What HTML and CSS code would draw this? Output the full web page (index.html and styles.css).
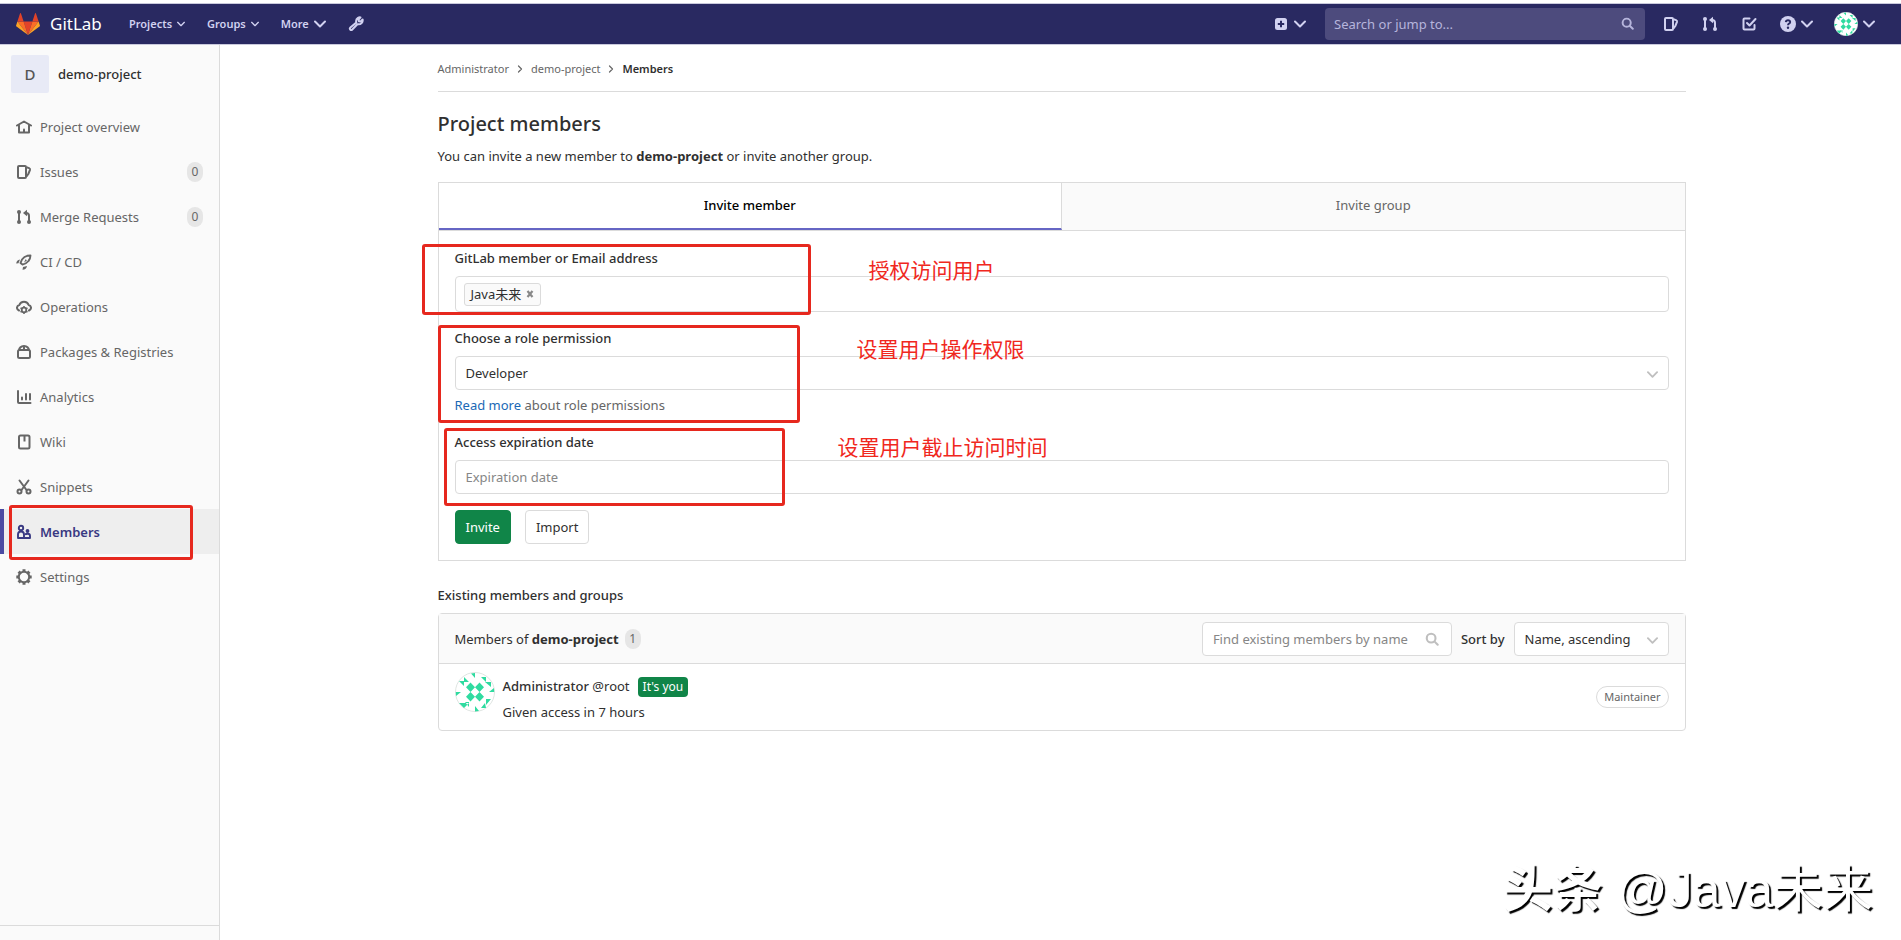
FILE: index.html
```html
<!DOCTYPE html>
<html lang="en">
<head>
<meta charset="utf-8">
<title>Members · demo-project · GitLab</title>
<link rel="stylesheet" href="styles.css">
</head>
<body>
<svg class="defs" aria-hidden="true">
  <symbol id="chevron" viewBox="0 0 12 12"><path d="M1 3.500l5 5 5-5" fill="none" stroke="currentColor" stroke-width="2" stroke-linecap="round" stroke-linejoin="round"/></symbol>
  <symbol id="angle" viewBox="0 0 8 8"><path d="M2.500 1l3 3-3 3" fill="none" stroke="currentColor" stroke-width="1.200" stroke-linecap="round" stroke-linejoin="round"/></symbol>
  <symbol id="search" viewBox="0 0 16 16"><g fill="none" stroke="currentColor" stroke-width="2.400" stroke-linecap="round"><circle cx="7" cy="7" r="5"/><path d="M11 11l3.500 3.500"/></g></symbol>
  <symbol id="issues" viewBox="0 0 16 16"><g fill="none" stroke="currentColor" stroke-width="2" stroke-linejoin="round"><rect x="2" y="2" width="8" height="12" rx="1"/><path d="M10.500 3.200l2.600.900q1.200.500.900 1.700L12.300 10l-1.800 2.500"/></g></symbol>
  <symbol id="merge" viewBox="0 0 16 16"><g fill="none" stroke="currentColor" stroke-width="2"><path d="M3 3v10M13 13V7q0-3-3-3H9.500"/></g><g fill="currentColor"><circle cx="3" cy="3" r="2"/><circle cx="3" cy="13" r="2"/><circle cx="13" cy="13" r="2"/><path d="M11 .800v6.400L7 4z"/></g></symbol>
  <symbol id="todo" viewBox="0 0 16 16"><g fill="none" stroke="currentColor" stroke-width="2" stroke-linecap="round" stroke-linejoin="round"><path d="M8.500 2.500H3.500q-1 0-1 1v9q0 1 1 1h9q1 0 1-1V9"/><path d="M6 7l2.500 2.500L14.500 3"/></g></symbol>
  <symbol id="identicon" viewBox="0 0 40 40">
    <circle cx="20" cy="20" r="19.500" fill="#fff" stroke="#dfe5e2"/>
    <g fill="#2fdba0">
      <path d="M15.500 10.500l4.500 4.700-4.500 4.800-4.500-4.800zM24.500 10.500l4.500 4.700-4.500 4.800-4.500-4.800zM15.500 20l4.500 4.700-4.500 4.800-4.500-4.800zM24.500 20l4.500 4.700-4.500 4.800-4.500-4.800z"/>
      <path d="M16 1.500l4-.500v5zM24 39l-4 .500V34zM.800 20H6l-5 4zM39.200 20H34l5-4z"/>
      <path d="M4 9h5v5zM9 5v5h5zM26 5l5 5V5zM30 10h6v5zM31 27v6l5-6zM30 31l-4 5h5zM4 31h10l-5 5zM10 30l4 5v-5z"/>
    </g>
  </symbol>
</svg>

<header class="navbar">
  <a class="brand" href="#">
    <svg class="tanuki" viewBox="0 0 24 22"><path fill="#e24329" d="M12 22l4.400-13.600H7.600z"/><path fill="#fc6d26" d="M12 22L7.600 8.400H1.400z"/><path fill="#fca326" d="M1.400 8.400L.100 12.500q-.200.700.400 1.100L12 22z"/><path fill="#e24329" d="M1.400 8.400h6.200L4.900.300q-.400-.500-.800 0z"/><path fill="#fc6d26" d="M12 22l4.400-13.600h6.200z"/><path fill="#fca326" d="M22.600 8.400l1.300 4.100q.200.700-.400 1.100L12 22z"/><path fill="#e24329" d="M22.600 8.400h-6.200L19.100.300q.400-.500.800 0z"/></svg>
    <span>GitLab</span>
  </a>
  <nav class="menus">
    <button type="button">Projects <svg class="chev small"><use href="#chevron"/></svg></button>
    <button type="button">Groups <svg class="chev small"><use href="#chevron"/></svg></button>
    <button type="button">More <svg class="chev"><use href="#chevron"/></svg></button>
    <a href="#" aria-label="Admin area"><svg class="icon" viewBox="0 0 16 16"><path d="M8.300 6.500q-.800-3 1.700-4.700 1.200-.700 2.500-.400L10.600 3.600l.3 1.600 1.700.300 2-2q.400 2-1 3.600-1.700 1.700-4.200 1.100L4.300 13.500q-1 1-2 .200-1-1.200.1-2.200z" fill="none" stroke="currentColor" stroke-width="2" stroke-linejoin="round"/></svg></a>
  </nav>
  <div class="tools">
    <button type="button" class="create" aria-label="New"><svg class="icon" viewBox="0 0 16 16"><rect x="2" y="2" width="12" height="12" rx="2.500" fill="currentColor"/><path d="M8 4.800v6.400M4.800 8h6.400" stroke="#292961" stroke-width="2"/></svg><svg class="chev"><use href="#chevron"/></svg></button>
    <label class="global-search"><input type="text" placeholder="Search or jump to..." aria-label="Search or jump to"><svg><use href="#search"/></svg></label>
    <a href="#" aria-label="Issues"><svg class="icon"><use href="#issues"/></svg></a>
    <a href="#" aria-label="Merge requests"><svg class="icon"><use href="#merge"/></svg></a>
    <a href="#" aria-label="To-Do List"><svg class="icon"><use href="#todo"/></svg></a>
    <button type="button" aria-label="Help"><svg class="icon" viewBox="0 0 16 16"><circle cx="8" cy="8" r="8" fill="currentColor"/><path d="M5.800 6.200q.200-2 2.200-2t2.200 1.800q0 1.200-1.200 1.700-1 .500-1 1.500" fill="none" stroke="#292961" stroke-width="1.900"/><circle cx="8" cy="11.800" r="1.200" fill="#292961"/></svg><svg class="chev"><use href="#chevron"/></svg></button>
    <button type="button" class="user" aria-label="Account"><svg class="face"><use href="#identicon"/></svg><svg class="chev"><use href="#chevron"/></svg></button>
  </div>
</header>

<div class="page">
  <aside class="sidebar">
    <a class="context" href="#"><span class="letter">D</span><strong>demo-project</strong></a>
    <nav class="side-nav">
      <a href="#"><svg class="icon" viewBox="0 0 16 16"><g fill="none" stroke="currentColor" stroke-width="2" stroke-linejoin="round" stroke-linecap="round"><path d="M1 6.500l7-4 7 4M3 6.500V13.500h10V6.500"/><path d="M8 10.500v2.500"/></g></svg><span>Project overview</span></a>
      <a href="#"><svg class="icon"><use href="#issues"/></svg><span>Issues</span><span class="badge">0</span></a>
      <a href="#"><svg class="icon"><use href="#merge"/></svg><span>Merge Requests</span><span class="badge">0</span></a>
      <a href="#"><svg class="icon" viewBox="0 0 16 16"><path d="M6.500 10.500l-2-1.500q1-4 4-6 2.500-1.500 6-1.500-.200 3.500-2 5.500-2.500 3-6 3.500z" fill="none" stroke="currentColor" stroke-width="1.900" stroke-linejoin="round"/><path d="M9.500 5.200l1.500 1-3 2.500zM.200 9.500Q.500 6 4 5.500L2.500 9.300zM6.500 15.800q4-.300 4.500-3.800L7 13z" fill="currentColor"/></svg><span>CI / CD</span></a>
      <a href="#"><svg class="icon" viewBox="0 0 16 16"><path d="M3 11.500Q.800 10.500 1 8.500q.300-2 2.300-2.500Q4.500 2.700 8 2.700T12.700 6q2 .500 2.300 2.500.200 2-2 3" fill="none" stroke="currentColor" stroke-width="2" stroke-linecap="round"/><circle cx="8" cy="11" r="2.300" fill="none" stroke="currentColor" stroke-width="1.800"/><path d="M8 7v1.500M8 13.500V15M4.500 9l1.300.700M11.500 9l-1.300.700M4.500 13l1.300-.700M11.500 13l-1.300-.700" stroke="currentColor" stroke-width="1.500"/></svg><span>Operations</span></a>
      <a href="#"><svg class="icon" viewBox="0 0 16 16"><g fill="none" stroke="currentColor" stroke-width="2" stroke-linejoin="round"><rect x="2" y="6" width="12" height="8" rx="1.500"/><path d="M3 6q.500-3.500 5-4 4.500.500 5 4M8 2v3.500"/></g></svg><span>Packages &amp; Registries</span></a>
      <a href="#"><svg class="icon" viewBox="0 0 16 16"><g fill="none" stroke="currentColor" stroke-width="2" stroke-linecap="round"><path d="M2 2v11q0 1 1 1h11.500M6 8.500v2M10 5v5.500M14 5v5.500"/></g></svg><span>Analytics</span></a>
      <a href="#"><svg class="icon" viewBox="0 0 16 16"><rect x="3" y="1.500" width="10.500" height="13" rx="1.500" fill="none" stroke="currentColor" stroke-width="2"/><path d="M8.500 2v5.500" stroke="currentColor" stroke-width="2"/></svg><span>Wiki</span></a>
      <a href="#"><svg class="icon" viewBox="0 0 16 16"><g fill="none" stroke="currentColor" stroke-width="2" stroke-linecap="round"><path d="M3.500 1.500l7 9.500M12.500 1.500l-7 9.500"/><circle cx="3.500" cy="12.500" r="2"/><circle cx="12.500" cy="12.500" r="2"/></g></svg><span>Snippets</span></a>
      <a href="#" class="active"><svg class="icon" viewBox="0 0 16 16"><g fill="none" stroke="currentColor" stroke-width="1.900" stroke-linejoin="round"><circle cx="5" cy="4" r="2.200"/><path d="M2 14v-3.500q0-3 3-3t3 3V14z"/><path d="M8 14h6v-2q0-2.300-2.300-2.300-2 0-2.700 1"/></g><circle cx="11.500" cy="7" r="1.900" fill="currentColor"/></svg><span>Members</span></a>
      <a href="#"><svg class="icon" viewBox="0 0 16 16"><circle cx="8" cy="8" r="5.200" fill="none" stroke="currentColor" stroke-width="2"/><path d="M8 .300V3M8 13v2.700M.300 8H3M13 8h2.700M2.600 2.600l1.800 1.800M11.600 11.600l1.800 1.800M13.400 2.600l-1.800 1.800M4.400 11.600l-1.800 1.800" stroke="currentColor" stroke-width="3"/></svg><span>Settings</span></a>
      <div class="mark mark-nav"></div>
    </nav>
    <div class="collapse"></div>
  </aside>

  <main class="content">
    <nav class="breadcrumbs">
      <a href="#">Administrator</a><svg><use href="#angle"/></svg><a href="#">demo-project</a><svg><use href="#angle"/></svg><a href="#" class="current">Members</a>
    </nav>
    <h1>Project members</h1>
    <p class="lead">You can invite a new member to <strong>demo-project</strong> or invite another group.</p>

    <div class="tabs">
      <button type="button" class="selected">Invite member</button>
      <button type="button">Invite group</button>
    </div>
    <form class="invite">
      <div class="group">
        <label for="who">GitLab member or Email address</label>
        <div class="field tokens">
          <span class="token">Java未来<button type="button" aria-label="Remove"><svg viewBox="0 0 8 8"><path d="M1.500 1l5 6M6.500 1l-5 6" stroke="currentColor" stroke-width="2.200"/></svg></button></span>
          <input id="who" type="text">
        </div>
        <div class="mark mark-who"></div>
        <span class="note note-who">授权访问用户</span>
      </div>
      <div class="group">
        <label for="role">Choose a role permission</label>
        <div class="select"><select id="role" class="field"><option>Developer</option></select><svg><use href="#chevron"/></svg></div>
        <p class="help"><a href="#">Read more</a> about role permissions</p>
        <div class="mark mark-role"></div>
        <span class="note note-role">设置用户操作权限</span>
      </div>
      <div class="group">
        <label for="expires">Access expiration date</label>
        <input id="expires" class="field" type="text" placeholder="Expiration date">
        <div class="mark mark-date"></div>
        <span class="note note-date">设置用户截止访问时间</span>
      </div>
      <div class="actions">
        <button type="button" class="btn primary">Invite</button>
        <button type="button" class="btn">Import</button>
      </div>
    </form>

    <h2>Existing members and groups</h2>
    <section class="card">
      <div class="card-head">
        <div>Members of <strong>demo-project</strong></div><span class="badge">1</span>
        <label class="find"><input class="field" type="text" placeholder="Find existing members by name" aria-label="Find existing members by name"><svg><use href="#search"/></svg></label>
        <label class="sort-label" for="sort">Sort by</label>
        <div class="select sort"><select id="sort" class="field"><option>Name, ascending</option></select><svg><use href="#chevron"/></svg></div>
      </div>
      <div class="member">
        <svg class="portrait"><use href="#identicon"/></svg>
        <div class="who">
          <div class="name"><a href="#">Administrator</a> <span>@root</span><span class="you">It's you</span></div>
          <div>Given access in 7 hours</div>
        </div>
        <span class="pill">Maintainer</span>
      </div>
    </section>
  </main>
</div>
<div class="watermark"><b>头条</b> @Java未来</div>
</body>
</html>
```
FILE: styles.css
```css
* { box-sizing: border-box; }
body {
  margin: 0;
  padding-top: 3px;
  min-height: 100vh;
  display: flex;
  flex-direction: column;
  background: #fff;
  color: #303030;
  font: 13px/20px "Noto Sans", "Noto Sans CJK SC", sans-serif;
}
a { color: inherit; text-decoration: none; }
button, input, select { font: inherit; color: inherit; }
button { border: 0; background: none; padding: 0; cursor: pointer; }
h1, h2, p { margin: 0; }
svg { display: block; flex: none; }
.defs { position: absolute; width: 0; height: 0; }
.icon { width: 16px; height: 16px; }

/* Top bar */
.navbar {
  display: flex;
  align-items: center;
  height: 42px;
  padding: 0 26px 0 16px;
  background: #292961;
  border-top: 1px solid #c9c9dc;
  border-bottom: 1px solid #c9c9dc;
  color: #d1d1f0;
}
.brand { display: flex; align-items: center; gap: 10px; width: 113px; color: #fff; font-size: 17px; }
.tanuki { width: 24px; height: 22px; }
.menus { display: flex; align-items: center; gap: 22px; font-size: 11px; font-weight: 600; }
.menus button { display: flex; align-items: center; gap: 5px; }
.chev { width: 12px; height: 12px; }
.chev.small { width: 8px; height: 8px; }
.tools { display: flex; align-items: center; gap: 23px; margin-left: auto; }
.tools button { display: flex; align-items: center; gap: 5px; }
.tools .create { margin-right: -4px; }
.global-search { position: relative; width: 320px; margin-right: -5px; }
.global-search input {
  width: 100%;
  height: 32px;
  padding: 0 32px 0 9px;
  border: 0;
  border-radius: 4px;
  background: #4d4b7d;
}
.global-search input::placeholder { color: #b6b5dc; opacity: 1; }
.global-search svg { position: absolute; right: 11px; top: 9px; width: 13px; height: 13px; color: #b6b5dc; }
.face { width: 24px; height: 24px; }
.tools .user { margin-left: -2px; }

/* Sidebar */
.page { display: flex; flex: 1; gap: 2px; }
.sidebar {
  display: flex;
  flex-direction: column;
  width: 220px;
  flex: none;
  border-right: 1px solid #dbdbdb;
  background: #fafafa;
  color: #666;
}
.context { display: flex; align-items: center; gap: 9px; padding: 10px 11px; color: #303030; }
.context strong { font-weight: 500; }
.letter {
  display: grid;
  place-items: center;
  width: 38px;
  height: 38px;
  border-radius: 2px;
  background: #e8eaf6;
  color: #555;
  font-size: 15px;
  font-weight: 500;
}
.side-nav { position: relative; padding-top: 1px; }
.side-nav a { display: flex; align-items: center; gap: 8px; height: 45px; padding: 0 16px; }
.side-nav .active {
  padding-left: 12px;
  border-left: 4px solid #4b4ba3;
  background: #eee;
  color: #393982;
  font-weight: 600;
}
.badge {
  min-width: 16px;
  height: 20px;
  padding: 0 4px;
  border-radius: 10px;
  background: #e6e6e6;
  color: #666;
  font-size: 12px;
  line-height: 20px;
  text-align: center;
}
.side-nav .badge { margin-left: auto; }
.collapse { height: 15px; margin-top: auto; border-top: 1px solid #dbdbdb; }

/* Content */
.content { flex: 1; max-width: 1248px; margin: 0 auto; }
.breadcrumbs {
  display: flex;
  align-items: center;
  gap: 7px;
  height: 47px;
  padding-top: 1px;
  border-bottom: 1px solid #dbdbdb;
  color: #666;
  font-size: 11px;
}
.breadcrumbs svg { width: 8px; height: 8px; }
.breadcrumbs .current { color: #303030; font-weight: 600; }
h1 { margin-top: 20px; font-size: 20px; line-height: 24px; font-weight: 500; }
.lead { margin: 10px 0 16px; }
.lead strong, .card-head strong { font-weight: 700; }

.tabs { display: flex; border: 1px solid #dbdbdb; }
.tabs button { flex: 1; height: 47px; padding-bottom: 4px; background: #fafafa; color: #666; }
.tabs .selected {
  padding-bottom: 2px;
  border-right: 1px solid #dbdbdb;
  border-bottom: 2px solid #6666c4;
  background: #fff;
  color: #000;
  font-weight: 500;
}
.invite {
  display: flex;
  flex-direction: column;
  gap: 16px;
  padding: 17px 16px 16px;
  border: 1px solid #dbdbdb;
  border-top: 0;
}
.group { position: relative; }
.group label { display: block; margin-bottom: 8px; font-weight: 500; }
.field {
  display: block;
  width: 100%;
  height: 34px;
  padding: 0 10px;
  border: 1px solid #dbdbdb;
  border-radius: 4px;
  background: #fff;
  outline: 0;
}
.field::placeholder { color: #868686; opacity: 1; }
.tokens { display: flex; align-items: center; gap: 8px; height: 36px; padding: 0 8px; }
.tokens input { flex: 1; border: 0; outline: 0; background: none; }
.token {
  display: flex;
  align-items: center;
  gap: 5px;
  height: 23px;
  padding: 0 6px;
  border: 1px solid #dbdbdb;
  border-radius: 3px;
  background: #fafafa;
}
.token svg { width: 8px; height: 8px; color: #888; }
.select { position: relative; }
.select select { appearance: none; }
.select svg { position: absolute; right: 11px; top: 13px; width: 11px; height: 11px; color: #bfbfbf; }
.help { margin-top: 5px; margin-bottom: 1px; color: #666; }
.help a { color: #1b69b6; }
.actions { display: flex; gap: 14px; }
.btn { height: 34px; padding: 0 10px; border: 1px solid #dbdbdb; border-radius: 4px; background: #fff; }
.primary { border-color: #108548; background: #108548; color: #fff; }

h2 { margin: 24px 0 8px; font-size: 13px; line-height: 20px; font-weight: 500; }
.card { border: 1px solid #dbdbdb; border-radius: 4px; }
.card-head {
  display: flex;
  align-items: center;
  height: 50px;
  padding: 0 16px;
  border-bottom: 1px solid #dbdbdb;
  background: #fafafa;
}
.card-head .badge { margin-left: 6px; }
.find { position: relative; width: 250px; margin-left: auto; }
.find svg { position: absolute; right: 13px; top: 10px; width: 14px; height: 14px; color: #bfbfbf; }
.sort-label { margin: 0 9px; font-weight: 500; }
.sort { width: 155px; }
.member { display: flex; align-items: center; gap: 8px; height: 66px; padding: 0 16px; }
.portrait { width: 40px; height: 40px; margin-bottom: 10px; }
.who { display: flex; flex-direction: column; gap: 5px; padding-top: 3px; }
.name a { font-weight: 500; }
.you {
  display: inline-block;
  margin-left: 8px;
  padding: 0 5px;
  border-radius: 4px;
  background: #108548;
  color: #fff;
  font-size: 12px;
}
.pill {
  margin-left: auto;
  padding: 0 7px;
  border: 1px solid #dbdbdb;
  border-radius: 11px;
  color: #666;
  font-size: 11px;
}

/* Annotations drawn over the page */
.mark { position: absolute; border: 3px solid #e6281e; border-radius: 3px; pointer-events: none; }
.mark-nav { left: 9px; top: 402px; width: 184px; height: 55px; }
.mark-who { left: -33px; top: -4px; width: 389px; height: 71px; }
.mark-role { left: -17px; top: -3px; width: 362px; height: 98px; }
.mark-date { left: -11px; top: -4px; width: 341px; height: 78px; }
.note { position: absolute; color: #f0281e; font-size: 21px; line-height: 28px; white-space: nowrap; }
.note-who { left: 414px; top: 8px; }
.note-role { left: 402px; top: 7px; }
.note-date { left: 383px; top: 1px; }
.watermark {
  position: absolute;
  right: 28px;
  bottom: 14px;
  color: #fff;
  font: 50px/72px "Liberation Sans", "Noto Sans CJK SC", sans-serif;
  text-shadow: 2px 2px 1px #000;
}
.watermark b { font-weight: 700; }
```
